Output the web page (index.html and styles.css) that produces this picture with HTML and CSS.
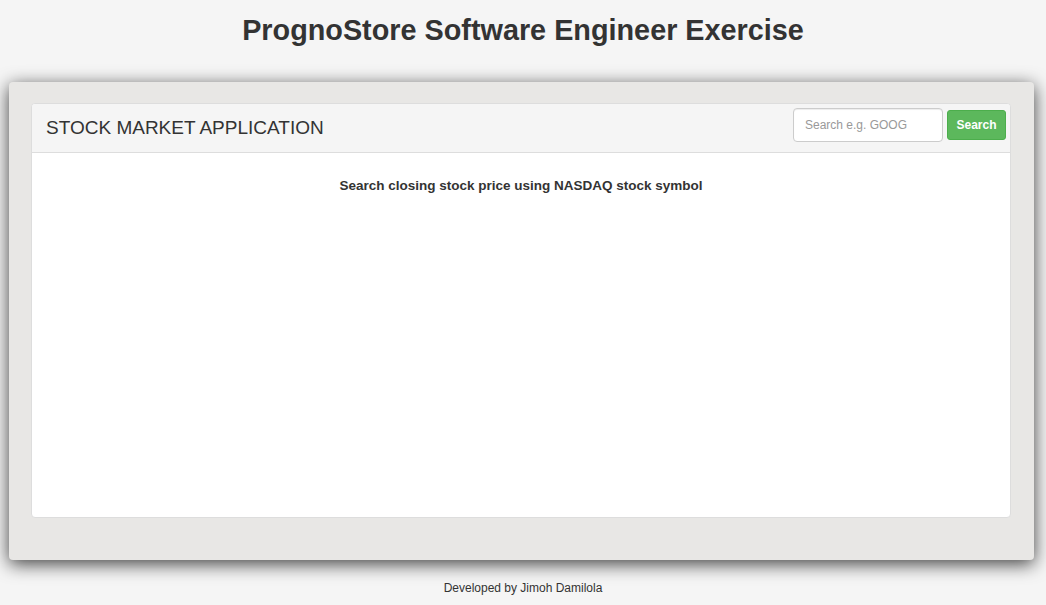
FILE: index.html
```html
<!DOCTYPE html>
<html>
<head>
<meta charset="utf-8">
<title>ProgneStore</title>
<link rel="stylesheet" href="styles.css">
</head>
<body>
<h1 class="title">PrognoStore Software Engineer Exercise</h1>
<div class="well">
  <div class="panel">
    <div class="panel-heading">
      <h3 class="panel-title">STOCK MARKET APPLICATION</h3>
      <form class="search-form">
        <input class="search-input" type="text" placeholder="Search e.g. GOOG">
        <button class="search-btn" type="button">Search</button>
      </form>
    </div>
    <div class="panel-body">
      <p class="lead-text">Search closing stock price using NASDAQ stock symbol</p>
    </div>
  </div>
</div>
<footer class="footer">Developed by Jimoh Damilola</footer>
</body>
</html>
```
FILE: styles.css
```css
html, body {
  margin: 0;
  padding: 0;
}
body {
  background: #f5f5f5;
  font-family: "Liberation Sans", Arial, sans-serif;
  color: #333;
  font-size: 14px;
}
.title {
  margin: 14px 0 35px;
  font-size: 28.8px;
  line-height: 33px;
  font-weight: bold;
  text-align: center;
  color: #333;
}
.well {
  margin: 0 12px 0 9px;
  padding: 21px 23px 42px 22px;
  background: #e8e7e5;
  border-radius: 4px;
  box-shadow: 0 4px 18px rgba(0, 0, 0, 0.75);
}
.panel {
  background: #fff;
  border: 1px solid #ddd;
  border-radius: 4px;
  display: flex;
  flex-direction: column;
  box-sizing: border-box;
  height: 415px;
}
.panel-heading {
  display: flex;
  align-items: flex-start;
  justify-content: space-between;
  background: #f5f5f5;
  border-bottom: 1px solid #ddd;
  border-radius: 3px 3px 0 0;
  box-sizing: border-box;
  height: 49px;
  padding: 4px 4px 0 14px;
}
.panel-title {
  margin: 8px 0 0;
  font-size: 19px;
  line-height: 24px;
  font-weight: normal;
  color: #333;
}
.search-form {
  display: flex;
  align-items: center;
  gap: 4px;
  margin: 0;
}
.search-input {
  box-sizing: border-box;
  width: 150px;
  height: 34px;
  padding: 6px 11px;
  border: 1px solid #ccc;
  border-radius: 4px;
  font-family: "Liberation Sans", Arial, sans-serif;
  font-size: 12px;
  color: #555;
  background: #fff;
  box-shadow: inset 0 1px 1px rgba(0,0,0,0.075);
}
.search-input::placeholder {
  color: #999;
}
.search-btn {
  box-sizing: border-box;
  width: 59px;
  height: 30px;
  border: 1px solid #4cae4c;
  border-radius: 3px;
  background: #5cb85c;
  color: #fff;
  font-family: "Liberation Sans", Arial, sans-serif;
  font-weight: bold;
  font-size: 12px;
  padding: 0;
}
.panel-body {
  flex: 1;
  padding: 23px 15px 15px;
}
.lead-text {
  margin: 0;
  text-align: center;
  font-weight: bold;
  font-size: 13.5px;
  line-height: 20px;
  color: #333;
}
.footer {
  margin-top: 20px;
  text-align: center;
  font-size: 12px;
  line-height: 17px;
  color: #333;
}
```
